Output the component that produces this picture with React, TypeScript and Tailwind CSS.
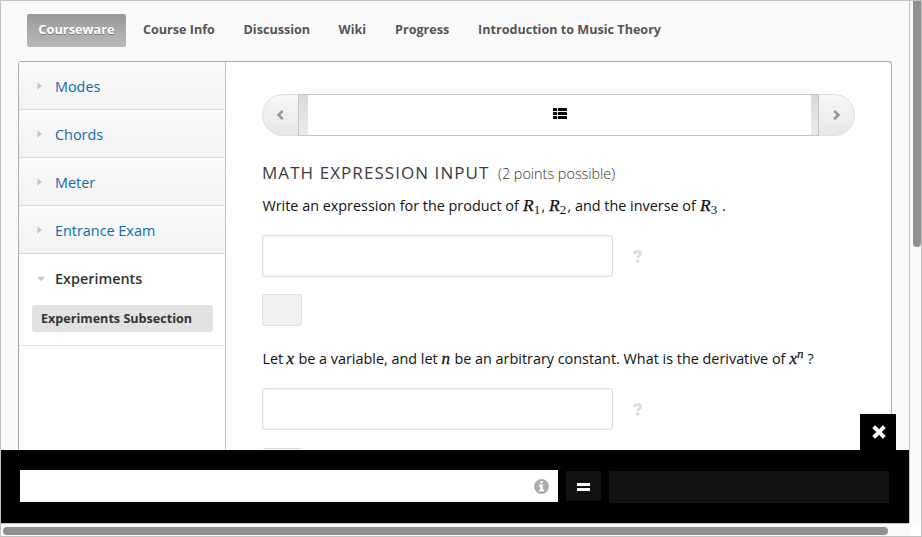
import React from "react";

const chapters = ["Modes", "Chords", "Meter", "Entrance Exam"];

function Chevron({ flip = false }: { flip?: boolean }) {
  return (
    <svg viewBox="0 0 8 10" className={flip ? "mb-px h-[10px] w-2 -scale-x-100" : "mr-[2px] mb-px h-[10px] w-2"}>
      <path d="M6.7 0.9 2.5 5l4.2 4.1" fill="none" stroke="#969696" strokeWidth="2.5" />
    </svg>
  );
}

function ListIcon() {
  return (
    <svg viewBox="0 0 14 11" className="mb-[3px] h-[11px] w-[14px]" fill="#000">
      {[0, 4, 8].map((y) => (
        <g key={y}>
          <rect x="0" y={y} width="4" height="3" rx="0.6" />
          <rect x="4.8" y={y} width="9.2" height="3" rx="0.6" />
        </g>
      ))}
    </svg>
  );
}

function HelpMark() {
  return (
    <svg viewBox="0 0 9 13" className="h-[13px] w-[9px]">
      <path d="M1 4C1.5 2.3 2.7 1.6 4.5 1.6c1.9 0 3.1.9 3.1 2.3 0 2-3 1.8-3 4.2" fill="none" stroke="#dedede" strokeWidth="3" />
      <rect x="3" y="9.4" width="3.2" height="3" rx="0.4" fill="#dedede" />
    </svg>
  );
}

function MathVar({ children }: { children: React.ReactNode }) {
  return <i className="font-['Liberation_Serif',serif] text-[17px] leading-none [-webkit-text-stroke:0.3px_#111]">{children}</i>;
}

function Indexed({ n, className }: { n: number; className: string }) {
  return (
    <span className={className}>
      <i className="font-['Liberation_Serif',serif] text-[17.5px] leading-none [-webkit-text-stroke:0.25px_#111]">R</i>
      <span className="relative top-[3px] font-['Liberation_Serif',serif] text-[13px] leading-none">{n}</span>
    </span>
  );
}

function AnswerRow() {
  return (
    <div className="flex items-center gap-[19.5px]">
      <div className="h-[42px] w-[351px] rounded-[2px] border border-[#dfdfdf] bg-white shadow-[inset_0_0_1px_1px_#f6f6f6]" />
      <HelpMark />
    </div>
  );
}

function Nav() {
  return (
    <nav className="flex h-[60px] shrink-0 items-start pt-[13px] pl-[26px] text-[12.6px] leading-[31px] font-bold whitespace-nowrap text-[#555]">
      <span className="mr-[17px] h-[33px] w-[99px] rounded-[2px] bg-linear-to-b from-[#999] to-[#b9b9b9] text-center text-[12.8px] text-white [text-shadow:0_1px_0_#777]">
        Courseware
      </span>
      <span className="w-[100.5px]">Course Info</span>
      <span className="w-[95px]">Discussion</span>
      <span className="w-[56.5px]">Wiki</span>
      <span className="w-[83px]">Progress</span>
      <span>Introduction to Music Theory</span>
    </nav>
  );
}

function Sidebar() {
  return (
    <aside className="w-[207px] shrink-0 border-r border-[#c6c6c6] text-[14.4px] whitespace-nowrap">
      {chapters.map((name) => (
        <div key={name} className="flex h-12 items-center border-b border-[#d9d9d9] bg-linear-to-b from-[#fafafa] to-[#f3f3f3] pl-[18px] text-[#0f6cab]">
          <svg viewBox="0 0 5 8" className="mr-[13px] h-2 w-[5px]" fill="#c4c4c4">
            <path d="M0.5 0l4.2 4-4.2 4z" />
          </svg>
          <span className="pt-[2px]">{name}</span>
        </div>
      ))}
      <div className="h-[92px] border-b border-[#e3e3e3]">
        <div className="flex h-[51px] items-center pl-[18px] text-[#333]">
          <svg viewBox="0 0 8 4" className="mr-[10px] -mt-[2px] h-1 w-2" fill="#c4c4c4">
            <path d="M0 0h8L4 4z" />
          </svg>
          <span className="-mt-px font-semibold">Experiments</span>
        </div>
        <div className="ml-[13px] h-[27px] w-[181px] rounded-[3px] bg-[#e2e2e2] pl-[9px] text-[12.6px] leading-[27px] font-bold text-[#333]">
          Experiments Subsection
        </div>
      </div>
    </aside>
  );
}

function SequenceNav() {
  return (
    <div className="flex h-[42px] w-[593px] shrink-0">
      <div className="flex w-9 items-center justify-center rounded-l-full border border-r-0 border-[#e0dede] bg-linear-to-b from-[#f8f8f8] to-[#e9e6e6]">
        <Chevron />
      </div>
      <div className="flex w-[521px] border border-[#c5c5c5] bg-white">
        <div className="w-[9px] bg-linear-to-b from-[#d9d9d9] to-[#ececec]" />
        <div className="flex flex-1 items-center justify-center">
          <ListIcon />
        </div>
        <div className="w-[7px] bg-linear-to-b from-[#d9d9d9] to-[#ececec]" />
      </div>
      <div className="flex w-9 items-center justify-center rounded-r-full border border-l-0 border-[#e0dede] bg-linear-to-b from-[#f8f8f8] to-[#e9e6e6]">
        <Chevron flip />
      </div>
    </div>
  );
}

function Problem() {
  return (
    <main className="flex flex-1 flex-col pt-8 pl-9 text-[14.4px] whitespace-nowrap text-[#111]">
      <SequenceNav />
      <h2 className="mt-[25px] flex h-6 shrink-0 items-baseline leading-6 text-[#3c3c3c]">
        <span className="w-[236px] text-[17px] tracking-[1.06px]">MATH EXPRESSION INPUT</span>
        <span className="text-[14.4px] font-light text-[#333]">(2 points possible)</span>
      </h2>
      <p className="mt-[10px] flex h-[21px] shrink-0 items-baseline pl-[0.4px] leading-[21px]">
        <span className="w-[260.6px]">Write an expression for the product of</span>
        <Indexed n={1} className="w-[18.5px]" />
        <span className="w-[7.5px]">,</span>
        <Indexed n={2} className="w-[18.5px]" />
        <span className="w-[132.5px]">, and the inverse of</span>
        <Indexed n={3} className="w-[22px]" />
        <span>.</span>
      </p>
      <div className="mt-[19px] shrink-0">
        <AnswerRow />
      </div>
      <div className="mt-[17px] h-8 w-10 shrink-0 rounded-[3px] border border-[#e0e0e0] bg-[#f0f0f0]" />
      <p className="mt-[22px] flex h-[21px] shrink-0 items-baseline pl-[0.4px] leading-[21px]">
        <span className="w-6">Let</span>
        <span className="w-[12px]"><MathVar>x</MathVar></span>
        <span className="w-[143px]">be a variable, and let</span>
        <span className="w-[13px]"><MathVar>n</MathVar></span>
        <span className="w-[335px]">be an arbitrary constant. What is the derivative of</span>
        <span className="w-[18px]">
          <MathVar>x</MathVar>
          <i className="relative -top-[6px] font-['Liberation_Serif',serif] text-[13px] leading-none [-webkit-text-stroke:0.2px_#111]">n</i>
        </span>
        <span>?</span>
      </p>
      <div className="mt-[19px] shrink-0">
        <AnswerRow />
      </div>
      <div className="mt-[18px] h-8 w-10 shrink-0 rounded-[3px] border border-[#e0e0e0] bg-[#f0f0f0]" />
    </main>
  );
}

function Calculator() {
  return (
    <div className="relative flex h-[73px] shrink-0 items-start bg-black pt-5 pl-[19px]">
      <button className="absolute -top-9 right-[13px] flex h-9 w-9 items-center justify-center bg-black">
        <svg viewBox="0 0 14 14" className="ml-[1px] h-[14px] w-[14px]">
          <path d="M1.7 1.7l10.6 10.6M12.3 1.7L1.7 12.3" stroke="white" strokeWidth="4" strokeLinecap="butt" />
        </svg>
      </button>
      <div className="flex h-8 w-[538px] items-center justify-end bg-white pr-[9px]">
        <svg viewBox="0 0 15 15" className="mt-px h-[15px] w-[15px]">
          <circle cx="7.5" cy="7.5" r="7.4" fill="#acacac" />
          <path d="M6.2 2.3h2.6v2H6.2zM5 5.6h3.8v4.9H10v1.8H5v-1.8h1.2V7.4H5z" fill="white" />
        </svg>
      </div>
      <button className="mt-[1px] ml-2 flex h-[30px] w-[35px] flex-col items-center justify-center gap-[2px] bg-[#111] pt-px">
        <span className="h-[3px] w-[13px] bg-white" />
        <span className="h-[3px] w-[13px] bg-white" />
      </button>
      <div className="mt-[1px] ml-2 h-8 w-[280px] bg-[#111]" />
    </div>
  );
}

export default function App() {
  return (
    <div className="flex h-[537px] w-[922px] flex-col overflow-hidden border border-[#c2c2c2] bg-[#fafafa] font-['Open_Sans',sans-serif]">
      <div className="flex h-[522px] shrink-0">
        <div className="flex w-[908px] flex-col">
          <div className="flex h-[449px] shrink-0 flex-col overflow-hidden">
            <Nav />
            <div className="ml-[17px] flex h-[389px] w-[874px] shrink-0 rounded-t-[3px] border border-b-0 border-[#aaa] bg-white">
              <Sidebar />
              <Problem />
            </div>
          </div>
          <Calculator />
        </div>
        <div className="flex w-3 flex-1 justify-end border-l border-[#c2c2c2]">
          <div className="h-[246px] w-2 rounded-b-full bg-[#909090]" />
        </div>
      </div>
      <div className="flex h-[13px] shrink-0">
        <div className="w-[908px] border-t border-[#c2c2c2] pt-[3px] pl-[2px]">
          <div className="h-2 w-[885px] rounded-full bg-[#909090]" />
        </div>
        <div className="flex-1 bg-white" />
      </div>
    </div>
  );
}
